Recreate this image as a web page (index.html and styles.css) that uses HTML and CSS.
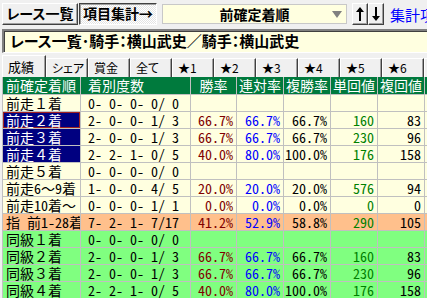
FILE: index.html
```html
<!DOCTYPE html>
<html lang="ja">
<head>
    <meta charset="UTF-8">
    <title>前確定着順</title>
    <link rel="stylesheet" href="styles.css">
</head>
<body>
    <div class="toolbar">
        <div class="btn">レース一覧</div>
        <div class="btn btn-on">項目集計→</div>
        <div class="select">
            <span>前確定着順</span>
            <i class="caret"></i>
        </div>
        <div class="arrows">
            <div class="arrow">
                <svg width="8" height="14" viewBox="0 0 8 14"><path d="M4 0 L8 5 L5 5 L5 14 L3 14 L3 5 L0 5 Z" fill="#000"/></svg>
            </div>
            <div class="arrow">
                <svg width="8" height="14" viewBox="0 0 8 14"><path d="M4 14 L8 9 L5 9 L5 0 L3 0 L3 9 L0 9 Z" fill="#000"/></svg>
            </div>
        </div>
        <span class="link">集計項目</span>
    </div>

    <div class="title">レース一覧･騎手：横山武史／騎手：横山武史</div>

    <div class="tabs">
        <div class="tab active">成績</div>
        <div class="tab">シェア</div>
        <div class="tab">賞金</div>
        <div class="tab">全て</div>
        <div class="tab">★1</div>
        <div class="tab">★2</div>
        <div class="tab">★3</div>
        <div class="tab">★4</div>
        <div class="tab">★5</div>
        <div class="tab">★6</div>
        <div class="tab">★7</div>
    </div>

    <div class="grid">
        <div class="row head">
            <div class="c">前確定着順</div>
            <div class="c cnt">着別度数</div>
            <div class="c mid">勝率</div>
            <div class="c mid">連対率</div>
            <div class="c mid">複勝率</div>
            <div class="c mid">単回値</div>
            <div class="c mid">複回値</div>
            <div class="c"></div>
        </div>
        <div class="row">
            <div class="c">前走１着</div>
            <div class="c cnt">0- 0- 0- 0/ 0</div>
            <div class="c"></div><div class="c"></div><div class="c"></div><div class="c"></div><div class="c"></div><div class="c"></div>
        </div>
        <div class="row">
            <div class="c sel focus">前走２着</div>
            <div class="c cnt">2- 0- 0- 1/ 3</div>
            <div class="c num win">66.7%</div>
            <div class="c num ren">66.7%</div>
            <div class="c num">66.7%</div>
            <div class="c num ret">160</div>
            <div class="c num">83</div>
            <div class="c"></div>
        </div>
        <div class="row">
            <div class="c sel">前走３着</div>
            <div class="c cnt">2- 0- 0- 1/ 3</div>
            <div class="c num win">66.7%</div>
            <div class="c num ren">66.7%</div>
            <div class="c num">66.7%</div>
            <div class="c num ret">230</div>
            <div class="c num">96</div>
            <div class="c"></div>
        </div>
        <div class="row">
            <div class="c sel">前走４着</div>
            <div class="c cnt">2- 2- 1- 0/ 5</div>
            <div class="c num win">40.0%</div>
            <div class="c num ren">80.0%</div>
            <div class="c num">100.0%</div>
            <div class="c num ret">176</div>
            <div class="c num">158</div>
            <div class="c"></div>
        </div>
        <div class="row">
            <div class="c">前走５着</div>
            <div class="c cnt">0- 0- 0- 0/ 0</div>
            <div class="c"></div><div class="c"></div><div class="c"></div><div class="c"></div><div class="c"></div><div class="c"></div>
        </div>
        <div class="row">
            <div class="c">前走6〜9着</div>
            <div class="c cnt">1- 0- 0- 4/ 5</div>
            <div class="c num win">20.0%</div>
            <div class="c num ren">20.0%</div>
            <div class="c num">20.0%</div>
            <div class="c num ret">576</div>
            <div class="c num">94</div>
            <div class="c"></div>
        </div>
        <div class="row">
            <div class="c">前走10着〜</div>
            <div class="c cnt">0- 0- 0- 1/ 1</div>
            <div class="c num win">0.0%</div>
            <div class="c num ren">0.0%</div>
            <div class="c num">0.0%</div>
            <div class="c num ret">0</div>
            <div class="c num">0</div>
            <div class="c"></div>
        </div>
        <div class="row orange">
            <div class="c">指 前1-28着</div>
            <div class="c cnt">7- 2- 1- 7/17</div>
            <div class="c num win">41.2%</div>
            <div class="c num ren">52.9%</div>
            <div class="c num">58.8%</div>
            <div class="c num ret">290</div>
            <div class="c num">105</div>
            <div class="c"></div>
        </div>
        <div class="row green">
            <div class="c">同級１着</div>
            <div class="c cnt">0- 0- 0- 0/ 0</div>
            <div class="c"></div><div class="c"></div><div class="c"></div><div class="c"></div><div class="c"></div><div class="c"></div>
        </div>
        <div class="row green">
            <div class="c">同級２着</div>
            <div class="c cnt">2- 0- 0- 1/ 3</div>
            <div class="c num win">66.7%</div>
            <div class="c num ren">66.7%</div>
            <div class="c num">66.7%</div>
            <div class="c num ret">160</div>
            <div class="c num">83</div>
            <div class="c"></div>
        </div>
        <div class="row green">
            <div class="c">同級３着</div>
            <div class="c cnt">2- 0- 0- 1/ 3</div>
            <div class="c num win">66.7%</div>
            <div class="c num ren">66.7%</div>
            <div class="c num">66.7%</div>
            <div class="c num ret">230</div>
            <div class="c num">96</div>
            <div class="c"></div>
        </div>
        <div class="row green">
            <div class="c">同級４着</div>
            <div class="c cnt">2- 2- 1- 0/ 5</div>
            <div class="c num win">40.0%</div>
            <div class="c num ren">80.0%</div>
            <div class="c num">100.0%</div>
            <div class="c num ret">176</div>
            <div class="c num">158</div>
            <div class="c"></div>
        </div>
    </div>
</body>
</html>
```

FILE: styles.css
```css
body {
    margin: 0;
    width: 427px;
    height: 298px;
    overflow: hidden;
    background-color: #f0f0f0;
    font-family: "Noto Sans CJK JP", sans-serif;
    color: #000;
}

/* верхняя панель */
.toolbar {
    display: flex;
    align-items: center;
    height: 28px;
    padding-left: 2px;
}

.toolbar > * {
    flex: none;
}

.btn {
    box-sizing: border-box;
    height: 22px;
    width: 76px;
    font-size: 14px;
    font-weight: bold;
    line-height: 19px;
    text-align: center;
    white-space: nowrap;
    font-feature-settings: "palt";
    border-top: 1px solid #fff;
    border-left: 1px solid #fff;
    border-right: 1px solid #404040;
    border-bottom: 1px solid #404040;
    box-shadow: inset -1px -1px 0 #a0a0a0;
}

.btn-on {
    width: 78px;
    margin-left: 1px;
    border-top-color: #404040;
    border-left-color: #404040;
    border-right-color: #fff;
    border-bottom-color: #fff;
    box-shadow: inset 1px 1px 0 #a0a0a0;
    background: repeating-conic-gradient(#fff 0 25%, #e4e4e4 0 50%) 0 0 / 2px 2px;
}

.select {
    box-sizing: border-box;
    position: relative;
    width: 185px;
    height: 20px;
    margin-left: 5px;
    background-color: #ffffe0;
    border: 1px solid #c8c8c8;
    text-align: center;
    font-size: 14px;
    font-weight: bold;
    line-height: 18px;
}

.caret {
    position: absolute;
    right: 4px;
    top: 6px;
    width: 0;
    height: 0;
    border-left: 5px solid transparent;
    border-right: 5px solid transparent;
    border-top: 7px solid #808080;
}

.arrows {
    display: flex;
    margin-left: 5px;
}

.arrow {
    box-sizing: border-box;
    width: 16px;
    height: 22px;
    display: flex;
    align-items: center;
    justify-content: center;
    border-top: 1px solid #fff;
    border-left: 1px solid #fff;
    border-right: 1px solid #404040;
    border-bottom: 1px solid #404040;
    box-shadow: inset -1px -1px 0 #a0a0a0;
}

.link {
    margin-left: 6px;
    color: #0000ff;
    font-size: 15px;
    white-space: nowrap;
}

/* заголовок */
.title {
    box-sizing: border-box;
    height: 24px;
    width: 440px;
    margin: 1px 0 0 2px;
    background-color: #ffffe0;
    border-top: 2px solid #808080;
    border-left: 2px solid #808080;
    border-bottom: 1px solid #fff;
    box-shadow: inset 1px 1px 0 #404040;
    padding-left: 6px;
    font-size: 15px;
    font-weight: bold;
    line-height: 20px;
    white-space: nowrap;
    font-feature-settings: "palt";
}

/* вкладки */
.tabs {
    display: flex;
    height: 22px;
    margin-top: 2px;
    padding-left: 2px;
    align-items: flex-end;
}

.tab {
    box-sizing: border-box;
    flex: 0 0 42px;
    height: 19px;
    padding-left: 5px;
    font-size: 12px;
    line-height: 17px;
    border-top: 1px solid #fff;
    border-left: 1px solid #fff;
    border-right: 1px solid #404040;
    box-shadow: inset -1px 0 0 #a0a0a0;
    white-space: nowrap;
    font-feature-settings: "palt";
}

.tab.active {
    flex-basis: 44px;
    height: 22px;
    line-height: 21px;
    font-size: 13px;
}

/* таблица */
.grid {
    margin-left: 2px;
    border-left: 1px solid #c0c0c0;
    font-family: "Noto Sans Mono CJK JP", "Noto Sans CJK JP", monospace;
    font-size: 14px;
}

.row {
    display: grid;
    grid-template-columns: 78px 110px 46px 47px 47px 47px 47px 47px;
    height: 17px;
    background-color: #ffffe0;
}

.row.head {
    height: 18px;
    background-color: #007a3d;
    color: #fff;
}

.row.orange {
    background-color: #ffc08c;
}

.row.green {
    background-color: #80ff80;
}

.c {
    box-sizing: border-box;
    border-right: 1px solid #c0c0c0;
    border-bottom: 1px solid #c0c0c0;
    line-height: 16px;
    padding-left: 3px;
    white-space: pre;
    overflow: hidden;
}

.head .c {
    line-height: 17px;
}

.head .mid {
    padding: 0;
    text-align: center;
}

.c.cnt {
    padding-left: 7px;
}

.c.num {
    padding: 0 3px 0 0;
    text-align: right;
}

.c.sel {
    background-color: #000080;
    color: #fff;
}

.c.focus {
    box-shadow: inset 0 0 0 1px #a02020;
}

.win { color: #800000; }
.ren { color: #0000ff; }
.ret { color: #008000; }
```
